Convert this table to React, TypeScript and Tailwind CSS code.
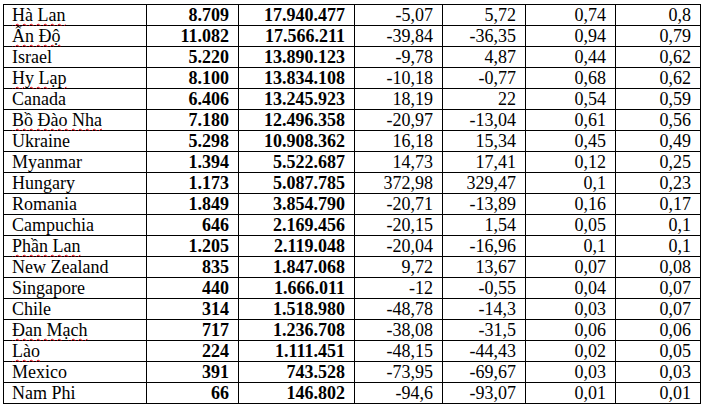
type Row = [string, string, string, string, string, string, string, boolean?];

const rows: Row[] = [
  ["Hà Lan", "8.709", "17.940.477", "-5,07", "5,72", "0,74", "0,8", true],
  ["Ấn Độ", "11.082", "17.566.211", "-39,84", "-36,35", "0,94", "0,79", true],
  ["Israel", "5.220", "13.890.123", "-9,78", "4,87", "0,44", "0,62"],
  ["Hy Lạp", "8.100", "13.834.108", "-10,18", "-0,77", "0,68", "0,62", true],
  ["Canada", "6.406", "13.245.923", "18,19", "22", "0,54", "0,59"],
  ["Bồ Đào Nha", "7.180", "12.496.358", "-20,97", "-13,04", "0,61", "0,56", true],
  ["Ukraine", "5.298", "10.908.362", "16,18", "15,34", "0,45", "0,49"],
  ["Myanmar", "1.394", "5.522.687", "14,73", "17,41", "0,12", "0,25"],
  ["Hungary", "1.173", "5.087.785", "372,98", "329,47", "0,1", "0,23"],
  ["Romania", "1.849", "3.854.790", "-20,71", "-13,89", "0,16", "0,17"],
  ["Campuchia", "646", "2.169.456", "-20,15", "1,54", "0,05", "0,1"],
  ["Phần Lan", "1.205", "2.119.048", "-20,04", "-16,96", "0,1", "0,1", true],
  ["New Zealand", "835", "1.847.068", "9,72", "13,67", "0,07", "0,08"],
  ["Singapore", "440", "1.666.011", "-12", "-0,55", "0,04", "0,07"],
  ["Chile", "314", "1.518.980", "-48,78", "-14,3", "0,03", "0,07"],
  ["Đan Mạch", "717", "1.236.708", "-38,08", "-31,5", "0,06", "0,06", true],
  ["Lào", "224", "1.111.451", "-48,15", "-44,43", "0,02", "0,05", true],
  ["Mexico", "391", "743.528", "-73,95", "-69,67", "0,03", "0,03"],
  ["Nam Phi", "66", "146.802", "-94,6", "-93,07", "0,01", "0,01"],
];

// Bảng số liệu theo thị trường — lưới 1px đen giống bảng Word
export default function App() {
  return (
    <div className="h-[408px] w-[706px] bg-white pl-[3px] pt-[3px]">
      <div className="inline-grid grid-cols-[142px_91px_115px_87px_82px_89px_84px] auto-rows-[20px] gap-px bg-black p-px font-['Liberation_Serif',serif] text-[18px] leading-[20px] text-black">
        {rows.map(([name, a, b, c, d, e, f, flagged]) => (
          <div key={name} className="contents">
            <div className="bg-white pl-[8px] whitespace-nowrap">
              <span
                className={
                  flagged
                    ? "underline decoration-wavy decoration-red-600 decoration-1 underline-offset-[2px]"
                    : ""
                }
              >
                {name}
              </span>
            </div>
            <div className="bg-white pr-[9px] text-right font-bold">{a}</div>
            <div className="bg-white pr-[9px] text-right font-bold">{b}</div>
            <div className="bg-white pr-[9px] text-right">{c}</div>
            <div className="bg-white pr-[9px] text-right">{d}</div>
            <div className="bg-white pr-[9px] text-right">{e}</div>
            <div className="bg-white pr-[9px] text-right">{f}</div>
          </div>
        ))}
      </div>
    </div>
  );
}
